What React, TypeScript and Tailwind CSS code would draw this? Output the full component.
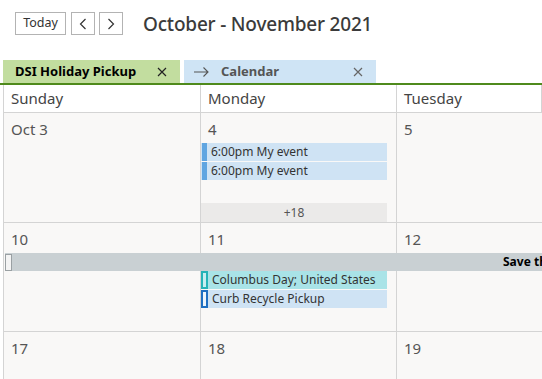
import React from "react"

const font = { fontFamily: '"Noto Sans", "Open Sans", sans-serif' }

const NavButton = ({ children }: { children: any }) => (
    <div className="h-[23px] flex items-center justify-center border border-[#b3b3b3] bg-white text-[#333]">
        {children}
    </div>
)

const CloseIcon = ({ color }: { color: string }) => (
    <svg width="10" height="10" viewBox="0 0 10 10">
        <path d="M1 1L9 9M9 1L1 9" stroke={color} strokeWidth="1.2" />
    </svg>
)

interface EventProps {
    label: string,
    bg: string,
    marker: any
}

const EventBar = ({ label, bg, marker }: EventProps) => (
    <div className={`h-[18px] w-[186px] flex items-center ${bg}`}>
        {marker}
        <span className="pl-[4px] text-[12px] leading-none text-[#333] whitespace-nowrap">{label}</span>
    </div>
)

const DateLabel = ({ text }: { text: string }) => (
    <div className="pl-[7px] pt-[6px] h-[30px] text-[15px] leading-[20px] text-[#555]">{text}</div>
)

export default function App() {
    return (
        <div className="w-[542px] h-[379px] overflow-hidden bg-white flex flex-col" style={font}>
            {/* top bar */}
            <div className="h-[60px] flex items-start pt-[12px] pl-[15px]">
                <div className="w-[51px]"><NavButton><span className="text-[12.5px]">Today</span></NavButton></div>
                <div className="w-[24px] ml-[5px]">
                    <NavButton>
                        <svg width="8" height="12" viewBox="0 0 8 12"><path d="M6.5 1L1.5 6L6.5 11" stroke="#333" strokeWidth="1.2" fill="none" /></svg>
                    </NavButton>
                </div>
                <div className="w-[24px] ml-[4px]">
                    <NavButton>
                        <svg width="8" height="12" viewBox="0 0 8 12"><path d="M1.5 1L6.5 6L1.5 11" stroke="#333" strokeWidth="1.2" fill="none" /></svg>
                    </NavButton>
                </div>
                <div className="ml-[20px] -mt-[2px] text-[19px] font-medium text-[#3b3b3b] tracking-[-0.2px]">October - November 2021</div>
            </div>

            {/* tabs */}
            <div className="h-[25px] pl-[3px] flex gap-[4px] border-b-2 border-[#4f8a1c]">
                <div className="w-[177px] h-[23px] bg-[#c2dd9f] flex items-center pl-[12px] pr-[13px]">
                    <span className="flex-1 text-[13px] font-bold text-black">DSI Holiday Pickup</span>
                    <CloseIcon color="#222" />
                </div>
                <div className="w-[192px] h-[23px] bg-[#cfe4f5] flex items-center pl-[10px] pr-[13px]">
                    <svg width="15" height="10" viewBox="0 0 15 10"><path d="M0 5H14M9.5 0.5L14 5L9.5 9.5" stroke="#555" strokeWidth="1.1" fill="none" /></svg>
                    <span className="flex-1 pl-[12px] text-[13px] font-bold text-[#555]">Calendar</span>
                    <CloseIcon color="#666" />
                </div>
            </div>

            {/* grid */}
            <div className="flex-1 pl-[3px] flex flex-col">
                <div className="flex-1 border-l border-[#d4d4d4] flex flex-col">
                    <div className="h-[28px] grid grid-cols-[197px_196px_1fr] border-b border-[#d4d4d4] bg-white">
                        {["Sunday", "Monday", "Tuesday"].map((d) => (
                            <div key={d} className="border-r border-[#d4d4d4] pl-[7px] text-[15px] leading-[26px] text-[#444]">{d}</div>
                        ))}
                    </div>

                    {/* week 1 */}
                    <div className="h-[110px] grid grid-cols-[197px_196px_1fr] border-b border-[#d4d4d4] bg-[#f9f8f7]">
                        <div className="border-r border-[#d4d4d4]"><DateLabel text="Oct 3" /></div>
                        <div className="border-r border-[#d4d4d4] flex flex-col">
                            <DateLabel text="4" />
                            <div className="flex flex-col gap-[1px]">
                                <EventBar label="6:00pm My event" bg="bg-[#cfe3f4]" marker={<div className="w-[5px] h-full ml-[1px] bg-[#5fa5e1]" />} />
                                <EventBar label="6:00pm My event" bg="bg-[#cfe3f4]" marker={<div className="w-[5px] h-full ml-[1px] bg-[#5fa5e1]" />} />
                            </div>
                            <div className="mt-auto h-[19px] w-[186px] bg-[#ebeae9] flex items-center justify-center text-[12px] text-[#555]">+18</div>
                        </div>
                        <div><DateLabel text="5" /></div>
                    </div>

                    {/* week 2 */}
                    <div className="h-[109px] grid grid-cols-[197px_196px_1fr] grid-rows-[30px_18px_1fr] border-b border-[#d4d4d4] bg-[#f9f8f7]">
                        <div className="border-r border-[#d4d4d4]"><DateLabel text="10" /></div>
                        <div className="border-r border-[#d4d4d4]"><DateLabel text="11" /></div>
                        <div><DateLabel text="12" /></div>
                        <div className="col-span-3 ml-[1px] bg-[#c9d0d3] flex items-center overflow-hidden">
                            <div className="shrink-0 w-[7px] h-[17px] border border-[#9aa0a3] bg-[#f4f4f4]" />
                            <span className="shrink-0 ml-[491px] text-[12px] font-bold text-black whitespace-nowrap">Save the Date</span>
                        </div>
                        <div className="border-r border-[#d4d4d4]" />
                        <div className="border-r border-[#d4d4d4] flex flex-col gap-[1px]">
                            <EventBar label="Columbus Day; United States" bg="bg-[#a9e3e7]" marker={<div className="w-[7px] h-full border-2 border-[#25b3b7] bg-[#c8eef0]" />} />
                            <EventBar label="Curb Recycle Pickup" bg="bg-[#cfe3f4]" marker={<div className="w-[7px] h-full border-2 border-[#1f6fc1] bg-[#eef5fb]" />} />
                        </div>
                        <div />
                    </div>

                    {/* week 3 */}
                    <div className="flex-1 grid grid-cols-[197px_196px_1fr] bg-[#f9f8f7]">
                        <div className="border-r border-[#d4d4d4]"><DateLabel text="17" /></div>
                        <div className="border-r border-[#d4d4d4]"><DateLabel text="18" /></div>
                        <div><DateLabel text="19" /></div>
                    </div>
                </div>
            </div>
        </div>
    )
}
